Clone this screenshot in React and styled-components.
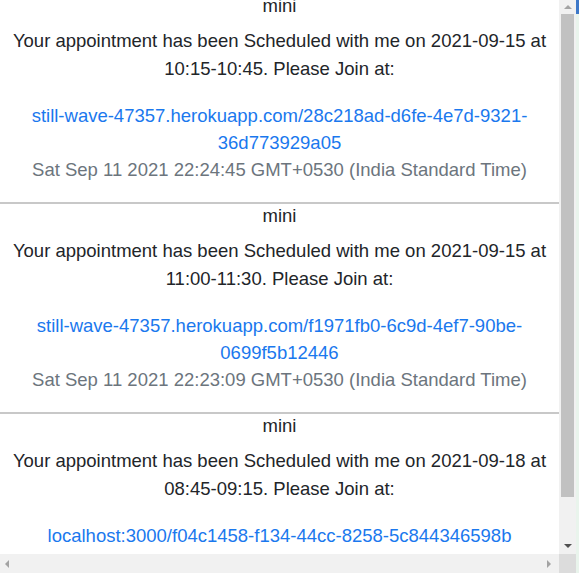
import React, { useRef, useLayoutEffect } from 'react';
import styled, { createGlobalStyle } from 'styled-components';

const GlobalStyle = createGlobalStyle`
  html, body {
    margin: 0;
    padding: 0;
    background: #ffffff;
  }
  body {
    font-family: 'Liberation Sans', Arial, sans-serif;
    overflow: hidden;
  }
`;

const appointments = [
  {
    owner: 'mini',
    date: '2021-09-15',
    slot: '10:15-10:45',
    link: 'still-wave-47357.herokuapp.com/28c218ad-d6fe-4e7d-9321-36d773929a05',
    created: 'Sat Sep 11 2021 22:24:45 GMT+0530 (India Standard Time)',
  },
  {
    owner: 'mini',
    date: '2021-09-15',
    slot: '11:00-11:30',
    link: 'still-wave-47357.herokuapp.com/f1971fb0-6c9d-4ef7-90be-0699f5b12446',
    created: 'Sat Sep 11 2021 22:23:09 GMT+0530 (India Standard Time)',
  },
  {
    owner: 'mini',
    date: '2021-09-18',
    slot: '08:45-09:15',
    link: 'localhost:3000/f04c1458-f134-44cc-8258-5c844346598b',
    created: 'Sat Sep 11 2021 22:20:51 GMT+0530 (India Standard Time)',
  },
];

const Frame = styled.div`
  display: flex;
  width: 579px;
  height: 573px;
`;

const MainColumn = styled.div`
  display: flex;
  flex-direction: column;
  width: 559px;
  min-width: 0;
`;

const Viewport = styled.div`
  flex: 1;
  overflow: hidden;
  font-size: 18.5px;
  color: #222529;
`;

const Card = styled.div`
  border-top: 2px solid #c8c8c8;
  padding: 0 8px 18px;
  text-align: center;
`;

const Owner = styled.div`
  line-height: 24px;
`;

const Message = styled.p`
  margin: 9px 0 19px;
  line-height: 28px;
`;

const JoinLink = styled.a`
  display: block;
  color: #1a78ee;
  text-decoration: none;
  line-height: 27px;
  word-wrap: break-word;
`;

const Stamp = styled.div`
  color: #6c757d;
  line-height: 28px;
`;

const HScroll = styled.div`
  display: flex;
  align-items: center;
  justify-content: space-between;
  height: 19px;
  padding: 0 8px 0 5px;
  background: #f1f1f1;
`;

const VScroll = styled.div`
  display: flex;
  flex-direction: column;
  width: 17px;
  background: #f1f1f1;
`;

const ArrowButton = styled.div`
  display: flex;
  align-items: center;
  justify-content: center;
  height: ${(p) => p.$size || 17}px;
  flex-shrink: 0;
`;

const Thumb = styled.div`
  height: 483px;
  margin: 0 2px;
  background: #c1c1c1;
  flex-shrink: 0;
`;

const Track = styled.div`
  flex: 1;
`;

const Corner = styled.div`
  height: 19px;
  background: #dcdcdc;
  flex-shrink: 0;
`;

const Triangle = styled.span`
  width: 0;
  height: 0;
  ${({ $dir, $color }) => {
    const c = $color || '#a3a3a3';
    if ($dir === 'up')
      return `border-left: 4px solid transparent; border-right: 4px solid transparent; border-bottom: 4px solid ${c};`;
    if ($dir === 'down')
      return `border-left: 4px solid transparent; border-right: 4px solid transparent; border-top: 4px solid ${c};`;
    if ($dir === 'left')
      return `border-top: 4px solid transparent; border-bottom: 4px solid transparent; border-right: 4px solid ${c};`;
    return `border-top: 4px solid transparent; border-bottom: 4px solid transparent; border-left: 4px solid ${c};`;
  }}
`;

const EdgeStrip = styled.div`
  width: 3px;
  background: linear-gradient(#3d78c8 0 14px, #e9f4ec 14px);
`;

const Appointment = ({ item }) => (
  <Card>
    <Owner>{item.owner}</Owner>
    <Message>
      Your appointment has been Scheduled with me on {item.date} at{' '}
      {item.slot}. Please Join at:
    </Message>
    <JoinLink href={'http://' + item.link}>{item.link}</JoinLink>
    <Stamp>{item.created}</Stamp>
  </Card>
);

const App = () => {
  const viewportRef = useRef(null);

  // the list is shown slightly scrolled, as in the capture
  useLayoutEffect(() => {
    if (viewportRef.current) viewportRef.current.scrollTop = 8;
  }, []);

  return (
    <>
      <GlobalStyle />
      <Frame>
        <MainColumn>
          <Viewport ref={viewportRef}>
            {appointments.map((item, i) => (
              <Appointment key={i} item={item} />
            ))}
          </Viewport>
          <HScroll>
            <Triangle $dir='left' />
            <Triangle $dir='right' />
          </HScroll>
        </MainColumn>
        <VScroll>
          <ArrowButton $size={14}>
            <Triangle $dir='up' />
          </ArrowButton>
          <Thumb />
          <Track />
          <ArrowButton $size={17}>
            <Triangle $dir='down' $color='#505050' />
          </ArrowButton>
          <Corner />
        </VScroll>
        <EdgeStrip />
      </Frame>
    </>
  );
};

export default App;
